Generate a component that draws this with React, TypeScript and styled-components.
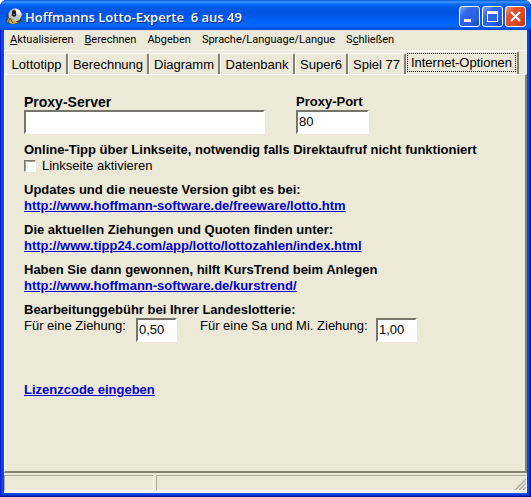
import React, { useState } from "react";
import styled, { createGlobalStyle, css } from "styled-components";

const face = "#ece9d8";

const GlobalStyle = createGlobalStyle`
  *, *::before, *::after { box-sizing: border-box; }
  body {
    margin: 0;
    background: #fff;
    color: #000;
    font: 13px/16px "Liberation Sans", Arial, sans-serif;
  }
  input, button { font: inherit; color: inherit; margin: 0; }
`;

const Window = styled.div`
  display: flex;
  flex-direction: column;
  min-height: 100vh;
  padding: 0 4px 4px;
  overflow: hidden;
  border-radius: 7px 7px 0 0;
  background: #0848e0;
  box-shadow: inset 1px 0 #0019cf, inset -1px -1px #00138c, inset -2px -2px #0030c8;
`;

const TitleBar = styled.header`
  display: flex;
  align-items: center;
  height: 30px;
  margin: 0 -4px;
  padding: 2px 5px 0 6px;
  background: linear-gradient(
    #0a58d8 0, #3d95ff 2px, #0a6cf5 4px, #0058e6 8px,
    #0054e3 14px, #0062fa 21px, #0066ff 26px, #005be8 28px, #0044cb 30px
  );
`;

const Title = styled.h1`
  flex: 1;
  margin: 0 0 0 3px;
  padding-top: 1px;
  color: #fff;
  font: 600 13px/16px "Open Sans", sans-serif;
  white-space: pre;
  text-shadow: 1px 1px #0a2d91;
`;

const Captions = styled.div`
  display: flex;
  gap: 2px;
`;

const CaptionButton = styled.button<{ $close?: boolean }>`
  display: grid;
  width: 21px;
  height: 21px;
  padding: 0;
  border: 1px solid #fff;
  border-radius: 3px;
  background: ${({ $close }) =>
    $close
      ? "linear-gradient(135deg, #f0a08a 0, #e0502d 30%, #dc4a23 70%, #b5320f 100%)"
      : "linear-gradient(135deg, #7fa5f7 0, #3468e8 30%, #2a5ee4 70%, #1743bd 100%)"};
`;

const MenuBar = styled.nav`
  display: flex;
  height: 20px;
  padding-left: 1px;
  background: ${face};
`;

const MenuItem = styled.button`
  padding: 0 6px 1px 5px;
  border: 0;
  background: none;
  font: 11px/18px Roboto, sans-serif;
  white-space: nowrap;
`;

const TabStrip = styled.div`
  display: flex;
  align-items: flex-end;
  height: 24px;
  padding-left: 1px;
  border-top: 1px solid #f8f7f0;
  border-left: 1px solid #fff;
  background: ${face};
`;

const Tab = styled.button<{ $basis: number; $selected?: boolean }>`
  flex: 0 1 ${({ $basis }) => $basis}px;
  height: 21px;
  padding: 0;
  border: solid;
  border-width: 1px 2px 0 1px;
  border-color: #fff #85816f #fff #fff;
  border-radius: 2px 2px 0 0;
  background: ${face};
  line-height: 19px;
  text-align: center;
  white-space: nowrap;
  ${({ $selected }) =>
    $selected &&
    css`
      height: 23px;
      padding: 1px 1px 2px 0;
      line-height: 17px;
      span {
        display: block;
        border: 1px dotted #000;
      }
    `}
`;

const Page = styled.main`
  display: flex;
  flex: 1;
  flex-direction: column;
  align-items: flex-start;
  gap: 8px;
  padding: 19px 18px 20px 19px;
  border: solid;
  border-width: 1px 2px 2px 1px;
  border-color: #fff #85816f #85816f #fff;
  background: ${face};
`;

const ProxyRow = styled.div`
  display: flex;
  gap: 31px;
  width: 100%;
`;

const Field = styled.label<{ $width: number }>`
  display: flex;
  flex-direction: column;
  flex: 0 1 ${({ $width }) => $width}px;
  min-width: 0;
  font-weight: bold;
  white-space: nowrap;
`;

const ServerField = styled(Field)`
  font-size: 14px;
`;

const TextBox = styled.input`
  width: 100%;
  height: 24px;
  padding: 0 0 1px 1px;
  border: 2px solid;
  border-color: #77746a #fff #fff #77746a;
  border-radius: 0;
  outline: 0;
  background: #fff;
  font-size: 13px;
  font-weight: normal;
`;

const AmountBox = styled(TextBox)`
  width: 41px;
`;

const Section = styled.section`
  max-width: 100%;
`;

const Heading = styled.h2`
  margin: 0;
  font: inherit;
  font-weight: bold;
`;

const Link = styled.a`
  display: block;
  color: #0000d4;
  font-weight: bold;
`;

const CheckLabel = styled.label`
  display: flex;
  align-items: center;
  gap: 6px;
  height: 16px;
`;

const CheckBox = styled.input`
  appearance: none;
  width: 12px;
  height: 12px;
  border: 1px solid;
  border-color: #77746a #fff #fff #77746a;
  background: #fff;
  box-shadow: inset 1px 1px #aaa799;
  &:checked { background: #fff radial-gradient(#000 0 3px, transparent 3px); }
`;

const Fees = styled.div`
  display: grid;
  grid-template-columns: 112px 64px 176px 41px;
  align-items: start;
`;

const License = styled(Link)`
  margin-top: 32px;
`;

const StatusBar = styled.footer`
  display: flex;
  gap: 2px;
  height: 20px;
  padding: 2px 0 1px;
  border-bottom: 1px solid #fff;
  background: ${face};
`;

const StatusPane = styled.div<{ $width?: number }>`
  display: flex;
  align-items: flex-end;
  justify-content: flex-end;
  flex: ${({ $width }) => ($width ? `0 0 ${$width}px` : 1)};
  border: 1px solid;
  border-color: #aca899 #fff #fff #aca899;
`;

const Ball = () => (
  <svg width="16" height="16" viewBox="0 0 16 16" aria-hidden="true">
    <path d="M0 14 1 6l5-5 8 8 2 4-5 3H2z" fill="#3a4356" />
    <circle cx="9" cy="7" r="6.500" fill="#c3c7cb" />
    <path d="M9 .5a6.500 6.500 0 0 1 6.500 7L11 6z" fill="#f3f4f4" />
    <path d="M1 14 3 9l4 2 5 4-6 1z" fill="#c8b452" />
    <path d="M2 15 4 10l3 5" fill="none" stroke="#50513e" />
    <g fill="none" stroke="#111" strokeWidth="1.500">
      <circle cx="8" cy="4" r="1.300" />
      <circle cx="8" cy="6.500" r="1.500" />
    </g>
  </svg>
);

const menus: [string, string, string][] = [
  ["", "A", "ktualisieren"],
  ["", "B", "erechnen"],
  ["Ab", "g", "eben"],
  ["Sprache/Language/Langue", "", ""],
  ["S", "c", "hließen"],
];

const tabs: [string, number][] = [
  ["Lottotipp", 62],
  ["Berechnung", 81],
  ["Diagramm", 71],
  ["Datenbank", 75],
  ["Super6", 53],
  ["Spiel 77", 58],
  ["Internet-Optionen", 113],
];

const links: [string, string][] = [
  ["Updates und die neueste Version gibt es bei:", "http://www.hoffmann-software.de/freeware/lotto.htm"],
  ["Die aktuellen Ziehungen und Quoten finden unter:", "http://www.tipp24.com/app/lotto/lottozahlen/index.html"],
  ["Haben Sie dann gewonnen, hilft KursTrend beim Anlegen", "http://www.hoffmann-software.de/kurstrend/"],
];

export default function App() {
  const [selected, setSelected] = useState("Internet-Optionen");
  return (
    <>
      <GlobalStyle />
      <Window>
        <TitleBar>
          <Ball />
          <Title>{"Hoffmanns Lotto-Experte  6 aus 49"}</Title>
          <Captions>
            <CaptionButton aria-label="Minimieren">
              <svg width="19" height="19"><path d="M4 12h7v3H4z" fill="#fff" /></svg>
            </CaptionButton>
            <CaptionButton aria-label="Maximieren">
              <svg width="19" height="19">
                <path d="M4 4h11v11H4zM5 7v7h9V7z" fill="#fff" fillRule="evenodd" />
              </svg>
            </CaptionButton>
            <CaptionButton $close aria-label="Schließen">
              <svg width="19" height="19">
                <path d="m5 5 9 9m0-9-9 9" stroke="#fff" strokeWidth="2.200" />
              </svg>
            </CaptionButton>
          </Captions>
        </TitleBar>
        <MenuBar>
          {menus.map(([before, key, after]) => (
            <MenuItem key={before + key}>
              {before}{key && <u>{key}</u>}{after}
            </MenuItem>
          ))}
        </MenuBar>
        <TabStrip role="tablist">
          {tabs.map(([name, basis]) => (
            <Tab
              key={name}
              role="tab"
              aria-selected={selected === name}
              $basis={basis}
              $selected={selected === name}
              onClick={() => setSelected(name)}
            >
              <span>{name}</span>
            </Tab>
          ))}
        </TabStrip>
        <Page>
          <ProxyRow>
            <ServerField $width={241}>
              Proxy-Server
              <TextBox />
            </ServerField>
            <Field $width={73}>
              Proxy-Port
              <TextBox defaultValue="80" />
            </Field>
          </ProxyRow>
          <Section>
            <Heading>Online-Tipp über Linkseite, notwendig falls Direktaufruf nicht funktioniert</Heading>
            <CheckLabel>
              <CheckBox type="checkbox" />
              Linkseite aktivieren
            </CheckLabel>
          </Section>
          {links.map(([text, url]) => (
            <Section key={url}>
              <Heading>{text}</Heading>
              <Link href={url}>{url}</Link>
            </Section>
          ))}
          <Section>
            <Heading>Bearbeitunggebühr bei Ihrer Landeslotterie:</Heading>
            <Fees>
              <label htmlFor="single">Für eine Ziehung:</label>
              <AmountBox id="single" defaultValue="0,50" />
              <label htmlFor="double">Für eine Sa und Mi. Ziehung:</label>
              <AmountBox id="double" defaultValue="1,00" />
            </Fees>
          </Section>
          <License href="#lizenz">Lizenzcode eingeben</License>
        </Page>
        <StatusBar>
          <StatusPane $width={150} />
          <StatusPane>
            <svg width="13" height="13" aria-hidden="true">
              <path d="m1 13 12-12M5 13l8-8M9 13l4-4" stroke="#fff" />
              <path d="m2 13 11-11M6 13l7-7M10 13l3-3" stroke="#aca899" strokeWidth="1.500" />
            </svg>
          </StatusPane>
        </StatusBar>
      </Window>
    </>
  );
}
